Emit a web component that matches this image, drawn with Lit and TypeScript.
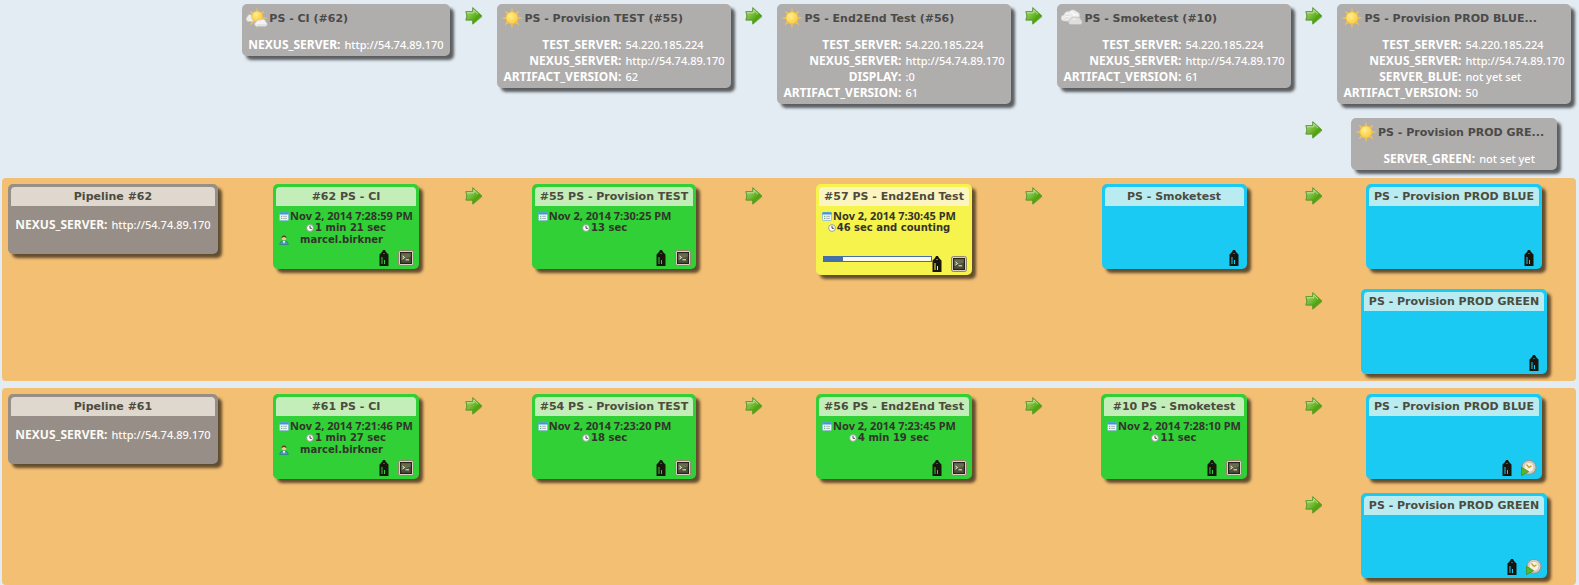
import { LitElement, html, svg, css, nothing, TemplateResult } from 'lit';
import { customElement } from 'lit/decorators.js';
import { classMap } from 'lit/directives/class-map.js';

type Weather = 'sunny' | 'partly' | 'cloudy';
type Param = [string, string];

interface Job {
  name: string;
  weather: Weather;
  params: Param[];
}

interface Build {
  name: string;
  status: 'success' | 'running' | 'pending';
  date?: string;
  duration?: string;
  user?: string;
  progress?: number;
  action?: 'console' | 'trigger';
}

interface Pipeline {
  name: string;
  params: Param[];
  builds: Build[];
}

const NEXUS: Param = ['NEXUS_SERVER', 'http://54.74.89.170'];
const TEST: Param = ['TEST_SERVER', '54.220.185.224'];

const JOBS: Job[] = [
  { name: 'PS - CI (#62)', weather: 'partly', params: [NEXUS] },
  { name: 'PS - Provision TEST (#55)', weather: 'sunny', params: [TEST, NEXUS, ['ARTIFACT_VERSION', '62']] },
  { name: 'PS - End2End Test (#56)', weather: 'sunny', params: [TEST, NEXUS, ['DISPLAY', ':0'], ['ARTIFACT_VERSION', '61']] },
  { name: 'PS - Smoketest (#10)', weather: 'cloudy', params: [TEST, NEXUS, ['ARTIFACT_VERSION', '61']] },
  { name: 'PS - Provision PROD BLUE...', weather: 'sunny', params: [TEST, NEXUS, ['SERVER_BLUE', 'not yet set'], ['ARTIFACT_VERSION', '50']] },
  { name: 'PS - Provision PROD GRE...', weather: 'sunny', params: [['SERVER_GREEN', 'not set yet']] },
];

const PIPELINES: Pipeline[] = [
  {
    name: 'Pipeline #62',
    params: [NEXUS],
    builds: [
      { name: '#62 PS - CI', status: 'success', date: 'Nov 2, 2014 7:28:59 PM', duration: '1 min 21 sec', user: 'marcel.birkner', action: 'console' },
      { name: '#55 PS - Provision TEST', status: 'success', date: 'Nov 2, 2014 7:30:25 PM', duration: '13 sec', action: 'console' },
      { name: '#57 PS - End2End Test', status: 'running', date: 'Nov 2, 2014 7:30:45 PM', duration: '46 sec and counting', progress: 18, action: 'console' },
      { name: 'PS - Smoketest', status: 'pending' },
      { name: 'PS - Provision PROD BLUE', status: 'pending' },
      { name: 'PS - Provision PROD GREEN', status: 'pending' },
    ],
  },
  {
    name: 'Pipeline #61',
    params: [NEXUS],
    builds: [
      { name: '#61 PS - CI', status: 'success', date: 'Nov 2, 2014 7:21:46 PM', duration: '1 min 27 sec', user: 'marcel.birkner', action: 'console' },
      { name: '#54 PS - Provision TEST', status: 'success', date: 'Nov 2, 2014 7:23:20 PM', duration: '18 sec', action: 'console' },
      { name: '#56 PS - End2End Test', status: 'success', date: 'Nov 2, 2014 7:23:45 PM', duration: '4 min 19 sec', action: 'console' },
      { name: '#10 PS - Smoketest', status: 'success', date: 'Nov 2, 2014 7:28:10 PM', duration: '11 sec', action: 'console' },
      { name: 'PS - Provision PROD BLUE', status: 'pending', action: 'trigger' },
      { name: 'PS - Provision PROD GREEN', status: 'pending', action: 'trigger' },
    ],
  },
];

const arrowIcon = html`<svg width="18" height="18" viewBox="0 0 18 18" aria-hidden="true">
  <defs><linearGradient id="g" x1="0" y1="0" x2="1" y2="1">
    <stop offset="0" stop-color="#b4dc8e" /><stop offset=".5" stop-color="#6cb52a" /><stop offset=".65" stop-color="#4ea40c" /><stop offset="1" stop-color="#66c81e" />
  </linearGradient></defs>
  <path d="M1 6.2h7.2V2l9.300 8-9.300 7.600v-4H1z" fill="#000" opacity=".18" />
  <path d="M.8 4.600h6.900V.6l9.200 8.300-9.200 8.200v-4H.8l1.200-4z" fill="url(#g)" stroke="#509a26" stroke-width=".9" stroke-linejoin="round" />
  <path d="M2 5.800h6.800V3l4.200 4.200" fill="none" stroke="#d3ecbc" stroke-width=".9" opacity=".8" />
</svg>`;

const rays = svg`<path
  d="M11 0l1.200 5.500h-2.400zM11 22l1.200-5.500h-2.400zM0 11l5.500-1.200v2.400zM22 11l-5.500-1.200v2.400zM3.400 3.400l4.400 2.600-1.800 1.800zM18.600 3.400l-2.600 4.400-1.800-1.800zM3.400 18.600l2.600-4.400 1.800 1.800zM18.600 18.600l-4.400-2.600 1.800-1.800z" fill="#ecc268" />`;

const weatherIcons: Record<Weather, TemplateResult> = {
  sunny: html`<svg width="22" height="22" viewBox="0 0 22 22" role="img" aria-label="Sunny">
    <defs><radialGradient id="s" cx=".4" cy=".35" r=".7"><stop offset="0" stop-color="#fff08a" /><stop offset="1" stop-color="#fbc53c" /></radialGradient></defs>
    ${rays}<circle cx="11" cy="11" r="6.200" fill="url(#s)" stroke="#eeb43c" stroke-width=".7" />
  </svg>`,
  partly: html`<svg width="22" height="22" viewBox="0 0 22 22" role="img" aria-label="Partly cloudy">
    <defs><radialGradient id="p" cx=".4" cy=".35" r=".7"><stop offset="0" stop-color="#fff08a" /><stop offset="1" stop-color="#fbc53c" /></radialGradient></defs>
    ${rays}
    <path d="M2 14.500a2.600 2.600 0 0 1-.8-4.600A3 3 0 0 1 5.600 8l3 6.500z" fill="#ededed" stroke="#c4c4c4" stroke-width=".5" />
    <circle cx="11.200" cy="9.500" r="5.500" fill="url(#p)" stroke="#eeb43c" stroke-width=".6" />
    <path d="M10.500 19.500a2.500 2.500 0 0 1-.2-4.800 3 3 0 0 1 3.900-1.700 3.500 3.500 0 0 1 5.800 2 2.500 2.500 0 0 1-.5 4.500z" fill="#f3f3f3" stroke="#bdbdbd" stroke-width=".6" />
    <path d="M10.500 18h9.500" stroke="#d4d4d4" />
  </svg>`,
  cloudy: html`<svg width="22" height="22" viewBox="0 0 22 22" role="img" aria-label="Cloudy">
    <path d="M3 14a3 3 0 0 1 0-6 4 4 0 0 1 5-3.500 5 5 0 0 1 7.500 0A4 4 0 0 1 18.500 10l-1 5z" fill="#ececec" stroke="#c6c6c6" stroke-width=".6" />
    <path d="M4 8.500a3 3 0 0 1 4.500-1M9.500 5a4 4 0 0 1 4 3.500M12 9a4 4 0 0 1 5-1M3 11.500a3 3 0 0 1 5-1" fill="none" stroke="#fff" />
    <path d="M4 9.500a3 3 0 0 1 4.500-1M3 12.500a3 3 0 0 1 5-1" fill="none" stroke="#c9c9c9" stroke-width=".6" />
    <path d="M9 17.500a3 3 0 0 1 .5-5.500 3.500 3.500 0 0 1 5-1.500 3.800 3.800 0 0 1 5.500 2.500 2.500 2.500 0 0 1-.5 4.500z" fill="#dedede" stroke="#b9b9b9" stroke-width=".6" />
    <path d="M11.500 13a2.500 2.500 0 0 1 3-.8" fill="none" stroke="#fafafa" />
  </svg>`,
};

const calendarIcon = html`<svg width="10" height="9" viewBox="0 0 10 9" aria-hidden="true">
  <rect x=".5" y=".5" width="9" height="8" rx=".8" fill="#eef6fc" stroke="#8db9d8" stroke-width=".8" />
  <path d="M.3 2.600V1q0-.8.800-.800h7.800q.8 0 .8.800v1.600z" fill="#3f97d3" />
  <path d="M2 4.300h1.300M2 6.400h1.300" stroke="#4c9d55" stroke-width=".9" />
  <path d="M4.200 4.300h3.800M4.200 6.400h3.800" stroke="#a6a9ae" stroke-width=".9" />
</svg>`;

const clockIcon = html`<svg width="8" height="8" viewBox="0 0 8 8" aria-hidden="true">
  <circle cx="4" cy="4" r="3.400" fill="#fdfdfd" stroke="#8b9a8e" stroke-width=".9" />
  <path d="M4 1.800V4.300h1.900" fill="none" stroke="#333" stroke-width=".9" />
</svg>`;

const userIcon = html`<svg width="10" height="10" viewBox="0 0 10 10" aria-hidden="true">
  <path d="M.7 9.500q0-3.300 3-3.500h2.600q3 .2 3 3.500z" fill="#4b93c9" stroke="#33638c" stroke-width=".5" />
  <path d="M3.700 6L5 8.800 6.300 6z" fill="#fff" />
  <circle cx="5" cy="3.300" r="2.200" fill="#f3c99c" />
  <path d="M2.600 3.600Q2.400.4 5 .4t2.400 3.200Q6.800 2 5 2T2.600 3.600z" fill="#5c3b1c" />
</svg>`;

const tagIcon = html`<svg width="10" height="16" viewBox="0 0 10 16" aria-hidden="true">
  <path fill-rule="evenodd" fill="#17150c"
    d="M4 0h2l1 2 2.500 2.500V16H.500V4.500L3 2zM4.500 3v1h1V3zM2.500 7v7h1V7zM5 10v4h1v-4z" />
</svg>`;

const consoleIcon = html`<svg width="16" height="16" viewBox="0 0 16 16" aria-hidden="true">
  <rect x=".5" y=".5" width="15" height="15" rx="1.800" fill="#d9cfc4" stroke="#94856f" />
  <rect x="2" y="2" width="12" height="12" fill="#23251a" />
  <rect x="3.200" y="3.200" width="9.600" height="9.600" fill="#4d5138" />
  <path d="M3.200 3.200h9.600v3.300L3.200 10z" fill="#747856" opacity=".7" />
  <path d="M4.500 6l2 1.500-2 1.500M7.500 9.800h3.500" fill="none" stroke="#f1f1e6" stroke-width="1" />
</svg>`;

const triggerIcon = html`<svg width="16" height="16" viewBox="0 0 16 16" aria-hidden="true">
  <circle cx="9.600" cy="8" r="6" fill="#a09f9b" />
  <circle cx="8" cy="7.300" r="7" fill="#d2cfc6" stroke="#8d8c86" stroke-width=".9" />
  <circle cx="8" cy="7.300" r="4.900" fill="#f6f2df" stroke="#bdb9a8" stroke-width=".6" />
  <path d="M8 7.500L5.500 4.500M8 7.500l2.500-1.800" stroke="#c79b2c" stroke-width="1.200" fill="none" />
  <path d="M.5 7.300l7.200 4.300L.5 15.700z" fill="#5cb522" stroke="#3f8d1a" stroke-width=".7" stroke-linejoin="round" />
</svg>`;

@customElement('app-root')
export class AppRoot extends LitElement {
  static styles = css`
    :host {
      display: block;
      min-height: 100vh;
      background: #e4ecf3;
      font-family: 'DejaVu Sans', Verdana, sans-serif;
      font-size: 11px;
    }
    svg {
      display: block;
      flex: none;
    }
    a {
      color: inherit;
      text-decoration: none;
    }
    .board {
      display: flex;
      flex-direction: column;
      gap: 7px;
      padding: 0 3px 0 2px;
    }
    .row {
      display: grid;
      grid-template-columns: 210fr 24px 208fr 48px 232fr 48px 232fr 48px 232fr 48px 232fr;
      row-gap: 14px;
      align-items: start;
      padding: 6px 6px 7px;
    }
    .jobs {
      padding: 4px 6px 1px;
    }
    .pipeline {
      background: #f3bf73;
      border-radius: 4px;
    }
    .first {
      grid-column: 3;
    }
    .arrow {
      justify-self: center;
      padding-top: 3px;
    }
    .arrow.branch {
      grid-column: 10;
    }
    .card {
      justify-self: center;
      border-radius: 5px;
      box-shadow: 4px 4px 3px rgba(0, 0, 0, 0.6);
    }
    .job {
      min-width: 206px;
      padding: 3px 0;
      background: #b0adad;
    }
    .title {
      margin: 0;
      font-size: 11px;
      font-weight: bold;
      white-space: nowrap;
      color: #4a4a48;
    }
    .job .title {
      display: flex;
      align-items: center;
      gap: 1px;
      height: 22px;
      padding: 0 8px 0 4px;
    }
    .params {
      width: 100%;
      border-collapse: collapse;
      color: #fff;
      font-family: 'Noto Sans', Tahoma, sans-serif;
      font-size: 11px;
      line-height: 16px;
      white-space: nowrap;
    }
    .job .params {
      margin-top: 8px;
    }
    .params th {
      padding: 0 4px 0 6px;
      text-align: right;
      font-size: 12px;
      font-weight: bold;
    }
    .params td {
      padding: 0 6px 0 0;
      font-weight: 500;
    }
    .build,
    .run {
      box-sizing: border-box;
      padding: 3px;
    }
    .build .title,
    .run .title {
      padding: 0 5px;
      line-height: 19px;
      text-align: center;
      border-radius: 4px 4px 0 0;
      color: #4d4b3e;
    }
    .run {
      justify-self: stretch;
      min-height: 70px;
      background: #968e87;
    }
    .run .title {
      background: #dfd8ce;
    }
    .run .params {
      margin-top: 11px;
      color: #fdf9f3;
    }
    .run .params th {
      padding-left: 3px;
    }
    .run .params td {
      padding-right: 3px;
    }
    .build {
      min-width: 145px;
    }
    .success {
      background: #31d037;
    }
    .success .title {
      background: #c3edb9;
    }
    .running {
      background: #f7f34d;
    }
    .running .title {
      background: #fcf5bf;
    }
    .pending {
      background: #1bcaf2;
    }
    .pending .title {
      background: #b9ebf0;
    }
    .details {
      width: max-content;
      min-height: 36px;
      padding: 4px 3px;
      color: #33342b;
      font-size: 10px;
      font-weight: bold;
      line-height: 12px;
    }
    .line {
      display: flex;
      align-items: center;
      justify-content: center;
      gap: 1px;
      height: 12px;
      white-space: nowrap;
    }
    .date {
      font-family: 'Noto Sans', Tahoma, sans-serif;
      font-size: 11px;
    }
    .user span {
      flex: 1;
      padding-right: 20px;
      text-align: center;
    }
    .footer {
      display: flex;
      justify-content: flex-end;
      align-items: flex-start;
      padding-right: 2px;
    }
    .running .footer {
      padding-top: 6px;
    }
    .progress {
      appearance: none;
      flex: 1;
      min-width: 0;
      box-sizing: border-box;
      width: 108px;
      height: 6px;
      margin-left: 4px;
      border: 1px solid #456fa8;
      background: #fdf9ea;
    }
    .progress::-webkit-progress-bar {
      background: #fdf9ea;
    }
    .progress::-webkit-progress-value {
      background: #456fa8;
    }
    .icon-button {
      padding: 0;
      border: 0;
      background: none;
      cursor: pointer;
    }
    .tag {
      margin-right: 3px;
    }
    .action {
      margin-left: 6px;
    }
    main {
      display: flex;
      flex-direction: column;
      gap: 7px;
    }
    .jobs {
      margin: 0 3px 0 2px;
    }
  `;

  private renderParams(params: Param[]) {
    return html`<table class="params">
      <tbody>
        ${params.map(([key, value]) => html`<tr><th scope="row">${key}:</th><td>${value}</td></tr>`)}
      </tbody>
    </table>`;
  }

  private renderArrow(index: number, count: number) {
    if (index === 0) return nothing;
    return html`<div class=${classMap({ arrow: true, branch: index === count - 1 })}>${arrowIcon}</div>`;
  }

  private renderJob(job: Job, index: number) {
    return html`${this.renderArrow(index, JOBS.length)}
      <article class=${classMap({ card: true, job: true, first: index === 0 })}>
        <h2 class="title">${weatherIcons[job.weather]}<a href="#">${job.name}</a></h2>
        ${this.renderParams(job.params)}
      </article>`;
  }

  private renderBuild(build: Build, index: number, count: number) {
    const label = build.action === 'console' ? 'Console output' : 'Trigger build';
    return html`${this.renderArrow(index, count)}
      <article class=${classMap({ card: true, build: true, [build.status]: true, first: index === 0 })}>
        <h3 class="title"><a href="#">${build.name}</a></h3>
        <div class="details">
          ${build.date ? html`<div class="line date">${calendarIcon}<span>${build.date}</span></div>` : nothing}
          ${build.duration ? html`<div class="line">${clockIcon}<span>${build.duration}</span></div>` : nothing}
          ${build.user ? html`<div class="line user">${userIcon}<span>${build.user}</span></div>` : nothing}
        </div>
        <div class="footer">
          ${build.progress !== undefined
            ? html`<progress class="progress" max="100" .value=${build.progress} aria-label="Build progress"></progress>`
            : nothing}
          <button class="icon-button tag" aria-label="Parameters">${tagIcon}</button>
          ${build.action
            ? html`<button class="icon-button action" aria-label=${label}>${build.action === 'console' ? consoleIcon : triggerIcon}</button>`
            : nothing}
        </div>
      </article>`;
  }

  render() {
    return html`<main>
      <section class="row jobs">${JOBS.map((job, i) => this.renderJob(job, i))}</section>
      <div class="board">
        ${PIPELINES.map(
          (p) => html`<section class="row pipeline">
            <article class="card run">
              <h2 class="title">${p.name}</h2>
              ${this.renderParams(p.params)}
            </article>
            ${p.builds.map((b, i) => this.renderBuild(b, i, p.builds.length))}
          </section>`
        )}
      </div>
    </main>`;
  }
}
